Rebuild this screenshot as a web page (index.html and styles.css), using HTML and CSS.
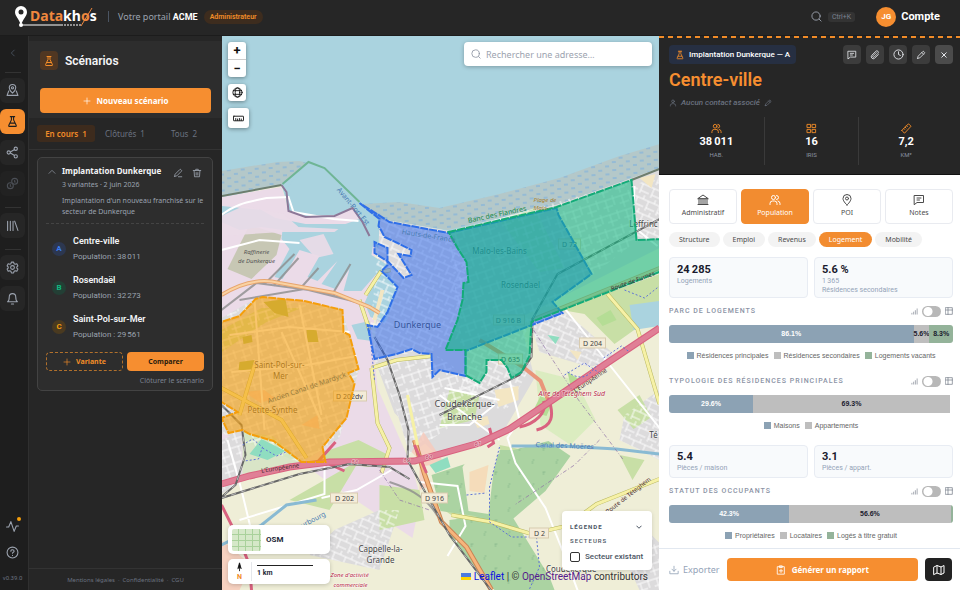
FILE: index.html
```html
<!DOCTYPE html>
<html lang="fr">
<head>
<meta charset="utf-8">
<meta name="viewport" content="width=device-width, initial-scale=1">
<title>Datakhos</title>
<link rel="stylesheet" href="styles.css">
</head>
<body>
<svg class="sprite" aria-hidden="true">
  <symbol id="flask" viewBox="0 0 24 24"><path d="M8 3h8M10 3v6L5 19.500a1 1 0 0 0 1 1.500h12a1 1 0 0 0 1-1.500L14 9V3M7.500 15h9"/></symbol>
  <symbol id="pencil" viewBox="0 0 24 24"><path d="M4 20l1-5L16 4a2 2 0 0 1 3 0l1 1a2 2 0 0 1 0 3L9 19l-5 1zM14 6l4 4"/></symbol>
  <symbol id="edit" viewBox="0 0 24 24"><path d="M4 20l1-5L16 4a2 2 0 0 1 3 0l1 1a2 2 0 0 1 0 3L9 19l-5 1zM13 21h8"/></symbol>
  <symbol id="trash" viewBox="0 0 24 24"><path d="M3 6h18M5 6l1 15h12l1-15M9 6V3h6v3M10 11v6M14 11v6"/></symbol>
  <symbol id="users" viewBox="0 0 24 24"><circle cx="9" cy="7" r="4"/><path d="M2 21v-2a5 5 0 0 1 5-5h4a5 5 0 0 1 5 5v2M15 3a4 4 0 0 1 0 8M18 14a5 5 0 0 1 4 5v2"/></symbol>
  <symbol id="user" viewBox="0 0 24 24"><circle cx="12" cy="7" r="4"/><path d="M4 21v-1a6 6 0 0 1 6-6h4a6 6 0 0 1 6 6v1"/></symbol>
  <symbol id="search" viewBox="0 0 24 24"><circle cx="11" cy="11" r="9"/><path d="M18 18l4 4"/></symbol>
  <symbol id="note" viewBox="0 0 24 24"><path d="M3 3h18v14H8l-5 4zM8 8h8M8 12h5"/></symbol>
  <symbol id="pin" viewBox="0 0 24 24"><path d="M12 22s8-7 8-13a8 8 0 0 0-16 0c0 6 8 13 8 13z"/><circle cx="12" cy="9" r="3"/></symbol>
  <symbol id="plus" viewBox="0 0 24 24"><path d="M12 3v18M3 12h18"/></symbol>
  <symbol id="bars" viewBox="0 0 24 24"><path d="M3 21v-3M9 21v-7M15 21V9M21 21V3"/></symbol>
  <symbol id="table" viewBox="0 0 24 24"><path d="M2 2h20v20H2zM2 9h20M9 2v20"/></symbol>
</svg>

<header class="topbar">
  <a class="logo" href="#" aria-label="Datakhos">
    <svg viewBox="0 0 85 24">
      <path class="logo-white" d="M6 0a6 6 0 0 1 6 6c0 4-4 7-6 13C4 13 0 10 0 6a6 6 0 0 1 6-6z"/>
      <circle class="logo-hole" cx="6" cy="6" r="2.500"/>
      <circle class="logo-white" cx="6" cy="19" r="2"/>
      <path class="logo-rule" d="M6 19h42"/><path class="logo-rule dots" d="M49 19h18"/>
      <text class="logo-word" x="15" y="15"><tspan class="logo-orange">Data</tspan>kh<tspan class="logo-orange">o</tspan>s</text>
      <path class="logo-slash" d="M77 2L66 20"/>
    </svg>
  </a>
  <span class="rule"></span>
  <p class="portal">Votre portail <b>ACME</b></p>
  <span class="role">Administrateur</span>
  <button class="quick" aria-label="Rechercher"><svg class="ic i11"><use href="#search"/></svg><kbd>Ctrl+K</kbd></button>
  <button class="account"><span class="avatar">JG</span>Compte</button>
</header>

<main class="shell">
  <nav class="rail" aria-label="Navigation">
    <button class="fold" aria-label="Replier"><svg class="ic i10" viewBox="0 0 24 24"><path d="M15 5l-7 7 7 7"/></svg></button>
    <hr>
    <button class="tool" aria-label="Carte"><svg class="ic i13" viewBox="0 0 24 24"><path d="M12 17s6-5 6-10a6 6 0 0 0-12 0c0 5 6 10 6 10z"/><circle cx="12" cy="7" r="2"/><path d="M5 13l-3 8h20l-3-8"/></svg></button>
    <button class="tool on" aria-label="Scénarios"><svg class="ic i13"><use href="#flask"/></svg></button>
    <button class="tool" aria-label="Réseau"><svg class="ic i13" viewBox="0 0 24 24"><circle cx="5" cy="12" r="3"/><circle cx="18" cy="5" r="3"/><circle cx="18" cy="19" r="3"/><path d="M8 11l7-4M8 13l7 4"/></svg></button>
    <button class="tool dim" aria-label="Comparer"><svg class="ic i13" viewBox="0 0 24 24"><circle cx="8" cy="16" r="5.500"/><circle cx="16" cy="8" r="5.500"/><path d="M8 14v3h1M16 6v3h1"/></svg></button>
    <hr>
    <button class="tool" aria-label="Bibliothèque"><svg class="ic i13" viewBox="0 0 24 24"><path d="M3 4v17M8 4v17M13 4v17M16 4l6 17"/></svg></button>
    <hr>
    <button class="tool" aria-label="Réglages"><svg class="ic i13" viewBox="0 0 24 24"><path d="M10 2h4l1 3 2 1 3-1 2 4-2 2v2l2 2-2 4-3-1-2 1-1 3h-4l-1-3-2-1-3 1-2-4 2-2v-2L2 9l2-4 3 1 2-1z"/><circle cx="12" cy="12" r="3.500"/></svg></button>
    <button class="tool" aria-label="Notifications"><svg class="ic i13" viewBox="0 0 24 24"><path d="M3 18c3-2 3-5 3-9a6 6 0 0 1 12 0c0 4 0 7 3 9zM10 22h4"/></svg></button>
    <div class="rail-end">
      <button class="plain" aria-label="Activité"><svg class="ic i13" viewBox="0 0 24 24"><path d="M1 13h4l4-10 6 18 4-10h4"/></svg><i class="dot"></i></button>
      <button class="plain" aria-label="Aide"><svg class="ic i13" viewBox="0 0 24 24"><circle cx="12" cy="12" r="10"/><path d="M9 9.500c0-4 6-3 6 0 0 2-3 2-3 4M12 17v.5"/></svg></button>
      <small>v0.39.0</small>
    </div>
  </nav>

  <aside class="side">
    <div class="side-head">
      <div class="side-title"><span class="badge"><svg class="ic i12"><use href="#flask"/></svg></span><h2>Scénarios</h2></div>
      <button class="primary wide"><svg class="ic i8"><use href="#plus"/></svg>Nouveau scénario</button>
    </div>
    <div class="filters">
      <button class="on">En cours <span>1</span></button><button>Clôturés <span>1</span></button><button>Tous <span>2</span></button>
    </div>
    <article class="scenario">
      <div class="sc-head">
        <svg class="ic i8 chev" viewBox="0 0 24 24"><path d="M3 16l9-9 9 9"/></svg>
        <div class="sc-name"><h3>Implantation Dunkerque</h3><p>3 variantes · 2 juin 2026</p></div>
        <button class="ghost" aria-label="Modifier"><svg class="ic i10"><use href="#edit"/></svg></button>
        <button class="ghost" aria-label="Supprimer"><svg class="ic i10"><use href="#trash"/></svg></button>
      </div>
      <p class="sc-desc">Implantation d'un nouveau franchisé sur le secteur de Dunkerque</p>
      <ul class="variants">
        <li><span class="mark a">A</span><div><b>Centre-ville</b><p>Population : 38&#8201;011</p></div></li>
        <li><span class="mark b">B</span><div><b>Rosendaël</b><p>Population : 32&#8201;273</p></div></li>
        <li><span class="mark c">C</span><div><b>Saint-Pol-sur-Mer</b><p>Population : 29&#8201;561</p></div></li>
      </ul>
      <div class="pair"><button class="dashed"><svg class="ic i8"><use href="#plus"/></svg>Variante</button><button class="primary dark">Comparer</button></div>
      <a class="close-sc" href="#">Clôturer le scénario</a>
    </article>
    <footer class="legal"><a href="#">Mentions légales</a>·<a href="#">Confidentialité</a>·<a href="#">CGU</a></footer>
  </aside>

  <section class="map" aria-label="Carte">
    <svg class="canvas" viewBox="222 36 438 554" preserveAspectRatio="xMidYMid slice">
      <defs>
        <pattern id="tide" width="14" height="8" patternUnits="userSpaceOnUse" patternTransform="rotate(-3)"><rect width="14" height="8" fill="#b4c8c9"/><path d="M1 2h4M8 6h4" stroke="#76aee2" stroke-width="1"/></pattern>
        <pattern id="streets" width="17" height="15" patternUnits="userSpaceOnUse" patternTransform="rotate(-18)"><path d="M0 3h17M0 10h10M4 3v12M12 0v10" stroke="#fff" stroke-width=".9" fill="none"/></pattern>
        <pattern id="streets2" width="12" height="14" patternUnits="userSpaceOnUse" patternTransform="rotate(24)"><path d="M0 4h12M3 4v10M9 0v4M3 11h9" stroke="#fff" stroke-width=".9" fill="none"/></pattern>
        <pattern id="wood" width="24" height="24" patternUnits="userSpaceOnUse"><path d="M5 5v3M5 4h2M16 16v3M15 16h3" stroke="#82b58a" stroke-width=".7"/></pattern>
      </defs>
      <rect x="222" y="36" width="438" height="554" fill="#aad3df"/>
      <path fill="#efeed7" d="M222 198L282 185L290 212L353 209L366 219L381 219L449 231L560 204L660 168V590H222z"/>
      <path fill="url(#tide)" d="M222 171l24-4 32-5 22-1 8 2-25 21-61 11zM362 204l38-2 40 6 60-14 60-16 60-22 40-12v26l-100 34-112 26-67-11z"/>
      <path fill="#ebdbe8" d="M222 197l60-10 8 26 63-5 25 15-3 35 15 20-18 50 6 60 35 80 8 30-8 40-90-60-20-15-81 15z"/>
      <path fill="#dcdbdc" d="M380 219l70 12 110-27 100-36v80l-140 70 15 60-35 60-60 20-45-45-20-54z"/>
      <path fill="#dcdbdc" d="M222 318l35-20 85 10 18 60-20 70-38 25-80-30zM222 440l20-8v50l-20 12zM375 360l60-6 45 30-10 30-60 40-15-50zM530 320l35-9 55 48-30 8-50-15zM400 510l-20 60-70-15 25-25 45-20zM620 548l25-20 15 15v47h-20zM625 415l35-25v70l-40-20z"/>
      <path fill="#c8dfa6" d="M324 452l35-12 30 15-20 12-45-5zM222 330l40-22 40 0-35 14-45 30zM562 310l98-36v38l-45 32-30-30zM450 390l30 5-5 25-35 8zM430 500l35-35 40 30-10 50zM618 410l22-15 12 22-18 12zM500 445l40 8-35 25zM380 485l40 5 5 30-45 10zM290 500l70-40-30 50zM620 455l25 5-12 20z"/>
      <path fill="#abd3a2" d="M432 475l55-18 62-16 22 15-25 35-35 30-70-10zM450 520l60-8 40 65 5 13h-60l-45-53zM500 450l60 0-10 30-50 20z"/>
      <path fill="url(#wood)" d="M432 475l55-18 62-16 22 15-25 35-35 30-70-10zM450 520l60-8 40 65 5 13h-60l-45-53z"/>
      <path fill="#efeed7" d="M478 446l22 2-6 24-5 42-20-3-6-44z"/>
      <path fill="#f5dcba" d="M470 472l19-7-4 28-15-2z"/>
      <path fill="#cdebb0" d="M243 432l30 4 28 24-8 7-50 7zM500 220l35-12 30 60-25 4zM536 370l40 10 20 40-25 25-30-20z" opacity=".6"/>
      <path fill="#b5dd95" d="M533 412l8-16 12 6-6 14zM568 372l16 10-12 8zM597 318l14-8 6 10-14 6z"/>
      <path fill="#c7c7b4" d="M250 225l32 10-5 20-25 24-24-10z"/>
      <path fill="#aad3df" d="M222 206l40 4 14 8 30 6 40 0 22-8 8 14-4 25 16 10-12 10-14 16-18 0 6-22-14 20-14-5 16-23-20 20-10-4 12-21-20-6-17 29-8-2 15-28-8-10 1-9-21-3-22 3-18-8zM286 190l22-28 17 6 55 51-1 30-8-10-18-31-18 7-29 1-18-6zM378 274l9-3 12 16-13 36-15-6-6-14zM352 325l18-4 2 20-14-2zM630 305l30-4v25l-26 4z"/>
      <path fill="#ebdbe8" d="M222 216l22-10 40 8 15 13 40 2-4 3-52 0-61 4zM300 240l24-6 10 20-18 4z" opacity=".9"/>
      <path fill="url(#streets)" d="M222 318l35-20 85 10 18 60-20 70-38 25-80-30zM450 232l180-50 6 60-105 80-70 25zM375 360l60-6 45 30-10 30-60 40-15-50zM222 440l20-8v50l-20 12zM620 548l25-20 15 15v47h-20z"/>
      <path fill="url(#streets2)" d="M381 220l65 12 20 35-5 70-30 15-55 5-5-30zM466 350l60-28 5 45-25 45-45-20zM530 320l35-9 55 48-30 8-50-15zM400 510l-20 60-70-15 25-25 45-20zM635 185l25-10v65l-22-2zM625 415l35-25v70l-40-20z"/>
      <path fill="#f7c9ba" d="M412 452l12-20 20 30-18 4zM222 540l30 25-12 25h-18zM420 465l8 22-8 3zM245 392l20-2 10 8-14 5zM302 425l16-10 2 14z" opacity=".8"/>
      <path fill="#8fddc0" d="M262 439l24 12-18 9-18-6zM548 335l12 2-4 7zM430 465l18-8 3 10-15 6zM499 395l8-2 1 6-7 2z"/>
      <path fill="#a9bd62" d="M240 362l15-2-4 12-12-2zM307 330l10 0 2 12-11 0zM243 337l9-2 1 7-9 2zM264 302l22-3 3 18-14-4z"/>
      <path fill="#f3e6c3" d="M385 290l-8 30-4 0 8-30zM495 390l24-4 0 14-20 7zM640 178l16-4-4 14zM570 350l12 2-4 8zM474 420l14-4 2 8-12 4z"/>
      <g fill="none" stroke="#fff" stroke-width="2"><path d="M222 215c15-12 28-13 45-17l22-1 5 15 40 7 25 2M240 520l85-26 0-35M565 308l95 120M228 440l14 50 12 50M420 482l38 4 8 40-18 30M510 380l10 40-12 18 8 25 30 45 20 50 15 40M440 425l30 0 25-20M500 400l-55-12M440 395l60 45M635 186l-2 40 25 20M322 498l35-8 35-20M222 250l38-10 40 3M230 335l60-8 60 5M282 332l40 90M232 372l70-6 55-10M255 300l10 130M300 305l22 110"/></g>
      <g fill="none" stroke="#8c8c8c" stroke-width="2" opacity=".8"><path d="M222 310l35-27 60 8 50 14M265 284l30-30M274 286l25-28M240 300l65-11 60 15M303 286l16-18M333 294l18-30M390 482c15 5 35 12 48 34"/></g>
      <g fill="none" stroke="#b7b65e" stroke-width="4"><path d="M366 295l15-23 10-2M360 300l10 30M372 368l25-8 35-4M372 368l6 55 12 25-8 25M222 388l60 32 25 38M452 515l40 7 20 6 20 6 35-8 30-22 63-25M608 294l30 35 22 75M240 415l15-50"/></g>
      <g fill="none" stroke="#f6f1a6" stroke-width="3"><path d="M366 295l15-23 10-2M360 300l10 30M372 368l25-8 35-4M372 368l6 55 12 25-8 25M222 388l60 32 25 38M452 515l40 7 20 6 20 6 35-8 30-22 63-25M608 294l30 35 22 75M240 415l15-50"/></g>
      <path d="M222 295q30-19 58-12l55 10 35 14 10 6M532 320l128-52" fill="none" stroke="#e7a56e" stroke-width="4"/>
      <path d="M222 295q30-19 58-12l55 10 35 14 10 6M532 320l128-52" fill="none" stroke="#fad2a2" stroke-width="2"/>
      <path d="M415 440l10 34 17 48 25 25 25 43" fill="none" stroke="#c98353" stroke-width="5"/>
      <path d="M415 440l10 34 17 48 25 25 25 43" fill="none" stroke="#f6b57c" stroke-width="3"/>
      <path d="M408 395l10 50" fill="none" stroke="#f6f1a6" stroke-width="3"/>
      <path d="M521 365l20 16 8 20M480 340l42 26" fill="none" stroke="#e9967a" stroke-width="4"/>
      <g fill="none" stroke="#d9627f" stroke-width="7"><path d="M222 484l28-8 40-9 40-5 85-1 65-18 30-14 40-27 62-42 48-32"/><path stroke-width="3" d="M318 462l18-20M325 462l20 9M549 398c6 18 4 28-12 32M520 427c15-3 28-14 24-26M222 505l20 40 8 20 2 25M490 428l4 15-6 4M415 445l12 28"/></g>
      <path d="M222 484l28-8 40-9 40-5 85-1 65-18 30-14 40-27 62-42 48-32" fill="none" stroke="#e07f96" stroke-width="5"/>
      <g fill="none" stroke="#666" stroke-width="2"><path d="M375 337l13 23 12 35 9 35-1 30 22 40 20 35 30 40 15 20M222 405l20 20 4 30-10 30-14 12M222 498l78-24 50-10 40 3 20 12M440 415l80-40 12-18 1-38 25-45 102-55"/></g>
      <g fill="none" stroke="#bbb" stroke-width="1" stroke-dasharray="5 5"><path d="M375 337l13 23 12 35 9 35-1 30 22 40 20 35 30 40 15 20M222 405l20 20 4 30-10 30-14 12M222 498l78-24 50-10 40 3 20 12M440 415l80-40 12-18 1-38 25-45 102-55"/></g>
      <g fill="none" stroke="#5f74d6" stroke-width="1" stroke-dasharray="2 2"><path d="M243 445l10-6 10 8-4 12-14 2M263 448l14 8 12-5M500 447l-10 40 0 35 22 15 25 0 3 30-10 22M467 495l20-2M565 375l20-12 15 10M625 290l20 8 15-12M370 330l5 50M604 358l18-12 8 6M568 372c15 10 22 4 30-8"/></g>
      <path d="M512 446l50 0 55 3 43 5M222 545l40-20 25-20 30-5" fill="none" stroke="#89bad3" stroke-width="3"/>
      <path d="M534 330l45 70 45 60M600 440l-25 25-60 40M380 470l20 30 30 10" fill="none" stroke="#8d6fa5" stroke-width="1" stroke-dasharray="4 2 1 2" opacity=".7"/>
      <path d="M282 185l5 7 2 19 17 6 29-1 18-8 10 14 7 14" fill="none" stroke="#8c7898" stroke-width="2"/>
      <path d="M222 196l60-11M660 169l-28 11" fill="none" stroke="#6e7e6e" stroke-width="2"/>
      <path d="M283 184l26-22 16 6 35 34" fill="none" stroke="#6fb595" stroke-width="2"/>

      <g class="place"><text x="280" y="368">Saint-Pol-sur-</text><text x="281" y="379">Mer</text><text x="273" y="413">Petite-Synthe</text><text class="city" x="418" y="328">Dunkerque</text><text x="500" y="254">Malo-les-Bains</text><text x="521" y="288">Rosendael</text><text class="city" x="465" y="407">Coudekerque-</text><text class="city" x="465" y="420">Branche</text><text x="381" y="552">Cappelle-la-</text><text x="381" y="563">Grande</text><text x="573" y="572">Coudekerque-</text><text x="644" y="227">Leffrinc</text><text x="654" y="438">Té</text></g>
      <g class="area"><text x="257" y="254">Raffinerie</text><text x="257" y="263">de Dunkerque</text></g>
      <g class="tags"><rect x="334" y="391" width="33" height="10"/><rect x="559" y="239" width="22" height="10"/><rect x="494" y="315" width="31" height="10"/><rect x="499" y="354" width="24" height="10"/><rect x="580" y="338" width="26" height="10"/><rect x="422" y="493" width="26" height="10"/><rect x="331" y="493" width="27" height="10"/><rect x="530" y="528" width="19" height="10"/></g>
      <g class="tagtext"><text x="350" y="399">D 202dv</text><text x="570" y="247">D 72</text><text x="509" y="323">D 916 B</text><text x="511" y="362">D 635</text><text x="593" y="346">D 204</text><text x="435" y="501">D 916</text><text x="345" y="501">D 202</text><text x="540" y="536">D 2</text></g>

      <path class="zone zc" d="M215 325l7-3 18-6 16-17 7-2 42 4 38 9 1 22 6 3 9 34-10 4 6 11-8 34-24 29 3 15h-24l-28-21-24-7-7-4-14 3-7-15 16-6-16-10h-7z"/>
      <path class="zone za" d="M360 203l20 16-1 7 3 5 3 6 13 6 14 7-1 6-12-2 13 21-8 3-15-16-14-9v-11l13 6v17l-6 6 16 16-10 25-10 15-10-2 7 34 22-5 15-5 8 4 12 1 1 23 7-7 26 6v-25l97-38-10-11 39-28-33-59-2-7-108 25-59-11z"/>
      <path class="zone zb" d="M449 232l108-25 75-27 5 60 28-1v31l-133 52-2 34-8 16-10 6-4-10-6-8h-15v12l-7 11-14-8v-25l-20 0 12-30 5-20 1-17 5-1-2-20-9-14z"/>
      <g class="water"><text transform="translate(337 190) rotate(50)">Avant-Port Est</text><text transform="translate(402 234) rotate(9)">Hauts-de-France</text><text transform="translate(536 447) rotate(2)">Canal des Moëres</text><text transform="translate(286 537) rotate(-28)">de Bourbourg</text></g>
      <g class="red"><text class="aire" x="539" y="396">Aire de Téteghem Sud</text><text x="331" y="577">Zone d'activité</text><text x="334" y="587">commerciale</text><text x="352" y="464">58</text><text x="404" y="462">59</text><text x="426" y="459">60</text><text x="475" y="446">61</text></g>
      <g class="road"><text transform="translate(592 382) rotate(-34)">L'Européenne</text><text transform="translate(281 470) rotate(-8)">L'Européenne</text><text transform="translate(630 497) rotate(-38)">Route de Téteghem</text><text transform="translate(634 283) rotate(-20)">Route de Furnes</text></g>
      <text class="canal" transform="translate(308 390) rotate(-19)">Ancien Canal de Mardyck</text>
      <text class="banc" transform="translate(469 223) rotate(-12)">Banc des Flandres</text>
      <g class="beach"><text x="534" y="202">Plage de</text><text x="534" y="210">Malo-</text></g>
    </svg>

    <div class="controls">
      <div class="zoom"><button aria-label="Zoom avant">+</button><button aria-label="Zoom arrière">−</button></div>
      <button class="sq" aria-label="Monde"><svg class="ic i11" viewBox="0 0 24 24"><circle cx="12" cy="12" r="10"/><ellipse cx="12" cy="12" rx="5" ry="10"/><path d="M3 8h18M3 16h18"/></svg></button>
      <button class="sq big" aria-label="Mesurer"><svg class="ic i11" viewBox="0 0 24 24"><rect x="1" y="7" width="22" height="10" rx="1"/><path d="M6 12v4M10 13v3M14 12v4M18 13v3"/></svg></button>
    </div>
    <label class="find"><svg class="ic i10"><use href="#search"/></svg><input type="search" placeholder="Rechercher une adresse…" aria-label="Rechercher une adresse"></label>
    <div class="bases">
      <button class="base"><span class="thumb"></span>OSM</button>
      <div class="scale"><div class="north"><svg viewBox="0 0 8 12"><path d="M4 1l2 7-2-2-2 2z"/><path d="M4 6v5"/></svg>N</div><div class="km"><i></i>1 km</div></div>
    </div>
    <div class="corner">
      <section class="legend">
        <button>LÉGENDE<svg class="ic i6" viewBox="0 0 24 24"><path d="M3 8l9 9 9-9"/></svg></button>
        <h4>SECTEURS</h4>
        <label><input type="checkbox">Secteur existant</label>
      </section>
      <p class="credit"><i class="flag"></i><a href="#">Leaflet</a> | © <a class="seen" href="#">OpenStreetMap</a> contributors</p>
    </div>
  </section>

  <aside class="panel">
    <header class="hero">
      <div class="hero-top">
        <span class="chip"><svg class="ic i10"><use href="#flask"/></svg>Implantation Dunkerque — A</span>
        <div class="acts">
          <button aria-label="Notes"><svg class="ic i10"><use href="#note"/></svg></button>
          <button aria-label="Pièces jointes"><svg class="ic i10" viewBox="0 0 24 24"><path d="M20 11l-9 9a5 5 0 0 1-7-7l10-10a3.500 3.500 0 0 1 5 5l-9 9a2 2 0 0 1-3-3l8-8"/></svg></button>
          <button aria-label="Historique"><svg class="ic i11" viewBox="0 0 24 24"><circle cx="12" cy="12" r="10"/><path d="M12 6v6l4 2"/></svg></button>
          <button aria-label="Modifier"><svg class="ic i10"><use href="#pencil"/></svg></button>
          <button class="x" aria-label="Fermer"><svg class="ic i6" viewBox="0 0 24 24"><path d="M3 3l18 18M21 3L3 21"/></svg></button>
        </div>
      </div>
      <h1>Centre-ville</h1>
      <p class="contact"><svg class="ic i8"><use href="#user"/></svg>Aucun contact associé<svg class="ic i8"><use href="#pencil"/></svg></p>
      <dl class="stats">
        <div><svg class="ic i11"><use href="#users"/></svg><dd>38&#8201;011</dd><dt>HAB.</dt></div>
        <div><svg class="ic i11" viewBox="0 0 24 24"><path d="M3 3h7v7H3zM14 3h7v7h-7zM3 14h7v7H3zM14 14h7v7h-7z"/></svg><dd>16</dd><dt>IRIS</dt></div>
        <div><svg class="ic i11" viewBox="0 0 24 24"><path d="M2 16L16 2q2 0 3 2t3 3L8 22q-2 0-3-2t-3-4zM12 6l2 2M9 9l2 2M6 12l2 2"/></svg><dd>7,2</dd><dt>KM²</dt></div>
      </dl>
    </header>
    <div class="body">
      <nav class="tabs">
        <button><svg class="ic i12" viewBox="0 0 24 24"><path d="M2 9l10-7 10 7zM2 21h20M4 9v12M8 9v12M12 9v12M16 9v12M20 9v12"/></svg>Administratif</button>
        <button class="on"><svg class="ic i12"><use href="#users"/></svg>Population</button>
        <button><svg class="ic i12"><use href="#pin"/></svg>POI</button>
        <button><svg class="ic i12"><use href="#note"/></svg>Notes</button>
      </nav>
      <nav class="pills"><button>Structure</button><button>Emploi</button><button>Revenus</button><button class="on">Logement</button><button>Mobilité</button></nav>
      <div class="cards tall"><div><b>24&#8201;285</b><p>Logements</p></div><div><b>5.6 %</b><p>1&#8201;365</p><p>Résidences secondaires</p></div></div>

      <section class="chart">
        <div class="chart-head"><h3>PARC DE LOGEMENTS</h3><svg class="ic i7"><use href="#bars"/></svg><input type="checkbox" role="switch" aria-label="Afficher le tableau du parc"><svg class="ic i8"><use href="#table"/></svg></div>
        <div class="stack"><span class="s1" style="width:86.1%">86.1%</span><span class="s2" style="width:5.6%">5.6%</span><span class="s3" style="width:8.3%">8.3%</span></div>
        <p class="key"><span class="k1">Résidences principales</span><span class="k2">Résidences secondaires</span><span class="k3">Logements vacants</span></p>
      </section>
      <section class="chart">
        <div class="chart-head"><h3>TYPOLOGIE DES RÉSIDENCES PRINCIPALES</h3><svg class="ic i7"><use href="#bars"/></svg><input type="checkbox" role="switch" aria-label="Afficher le tableau de typologie"><svg class="ic i8"><use href="#table"/></svg></div>
        <div class="stack"><span class="s1" style="width:29.6%">29.6%</span><span class="s2" style="width:69.3%">69.3%</span></div>
        <p class="key"><span class="k1">Maisons</span><span class="k2">Appartements</span></p>
      </section>
      <div class="cards"><div><b>5.4</b><p>Pièces / maison</p></div><div><b>3.1</b><p>Pièces / appart.</p></div></div>
      <section class="chart">
        <div class="chart-head"><h3>STATUT DES OCCUPANTS</h3><svg class="ic i7"><use href="#bars"/></svg><input type="checkbox" role="switch" aria-label="Afficher le tableau des occupants"><svg class="ic i8"><use href="#table"/></svg></div>
        <div class="stack"><span class="s1" style="width:42.3%">42.3%</span><span class="s2" style="width:56.9%">56.6%</span><span class="s3" style="width:0.8%"></span></div>
        <p class="key"><span class="k1">Propriétaires</span><span class="k2">Locataires</span><span class="k3">Logés à titre gratuit</span></p>
      </section>
    </div>
    <footer class="foot">
      <button class="export"><svg class="ic i10" viewBox="0 0 24 24"><path d="M2 15v6h20v-6M12 3v12M7 10l5 5 5-5"/></svg>Exporter</button>
      <button class="primary report"><svg class="ic i10" viewBox="0 0 24 24"><path d="M4 4h16v18H4zM9 2h6v4H9zM12 10v8M8 14h8"/></svg>Générer un rapport</button>
      <button class="mapbtn" aria-label="Plan"><svg class="ic i12" viewBox="0 0 24 24"><path d="M2 6l6-3 8 3 6-3v15l-6 3-8-3-6 3zM8 3v15M16 6v15"/></svg></button>
    </footer>
  </aside>
</main>
</body>
</html>
```

FILE: styles.css
```css
* { box-sizing: border-box; margin: 0; padding: 0; }
html, body { height: 100%; }
body {
  display: flex; flex-direction: column; overflow: hidden;
  background: #262626; color: #f3f4f6;
  font-family: Roboto, "Noto Sans", sans-serif; font-size: 8px; line-height: 12px;
}
button, input { font: inherit; color: inherit; border: 0; background: none; }
button { cursor: pointer; display: flex; align-items: center; justify-content: center; }
a { color: inherit; text-decoration: none; }
ul { list-style: none; }
.sprite { position: absolute; width: 0; height: 0; }
.ic { fill: none; stroke: currentColor; stroke-width: 2; stroke-linecap: round; stroke-linejoin: round; flex: none; display: block; }
.i6 { width: 6px; height: 6px; stroke-width: 4; }
.i7 { width: 7px; height: 7px; }
.i8 { width: 8px; height: 8px; }
.i10 { width: 10px; height: 10px; }
.i11 { width: 11px; height: 11px; }
.i12 { width: 12px; height: 12px; }
.i13 { width: 13px; height: 13px; }

/* Top bar */
.topbar { flex: none; height: 36px; display: flex; align-items: center; padding: 0 20px 2px 15px; border-bottom: 1px solid #1c1c1c; }
.logo svg { display: block; width: 85px; height: 24px; margin-top: 3px; }
.logo-white { fill: #fff; }
.logo-hole { fill: #262626; }
.logo-rule { stroke: #fff; stroke-width: 1; }
.dots { stroke-dasharray: 2 1; }
.logo-word { font: 700 14px "Noto Sans", sans-serif; fill: #fff; }
.logo-orange { fill: #f0883e; }
.logo-slash { stroke: #f0883e; stroke-width: 1; }
.rule { width: 1px; height: 11px; background: #4b5563; margin: 0 9px 0 8px; }
.portal { font: 9px/14px "Noto Sans", sans-serif; color: #9ca3af; }
.portal b { color: #fff; font-family: Roboto, sans-serif; font-size: 9px; }
.role { margin-left: 6px; padding: 1px 6px; border-radius: 8px; background: #3d2c1e; color: #f28c28; font-weight: 600; font-size: 7px; }
.quick { margin-left: auto; gap: 6px; color: #9ca3af; }
.quick kbd { font: 7px/10px Roboto, sans-serif; background: #333; border-radius: 3px; padding: 0 4px; color: #7b8290; }
.account { margin-left: 21px; gap: 5px; font-size: 11px; font-weight: 700; color: #fff; }
.avatar { width: 20px; height: 20px; border-radius: 50%; background: #f68e30; font-size: 8px; line-height: 20px; text-align: center; }

.shell { flex: 1; min-height: 0; display: grid; grid-template-columns: 28px 194px minmax(0, 1fr) 301px; }

/* Icon rail */
.rail { background: #1e1e1e; display: flex; flex-direction: column; align-items: flex-start; gap: 6px; padding-top: 8px; color: #9ca3af; }
.rail hr { width: 16px; border: 0; border-top: 1px solid #333; margin: 5px 0 0 5px; }
.rail hr + .tool { margin-top: -1px; }
.tool { width: 25px; height: 25px; border-radius: 6px; background: #262626; }
.tool.on { background: #f68e30; color: #1e1e1e; }
.tool.dim { color: #4b4f56; background: #222; }
.fold { width: 25px; height: 17px; color: #4b5563; }
.rail-end { margin-top: auto; width: 25px; display: flex; flex-direction: column; align-items: center; gap: 13px; padding-bottom: 6px; }
.plain { position: relative; }
.dot { position: absolute; top: -3px; right: -2px; width: 4px; height: 4px; border-radius: 50%; background: #f59e0b; }
.rail-end small { font-size: 6px; color: #6b7280; }

/* Scenario sidebar */
.side { display: flex; flex-direction: column; border-left: 1px solid #303030; font-family: "Noto Sans", sans-serif; min-width: 0; }
.side-head { background: #2d2d2d; margin-top: 5px; padding: 10px 11px 5px; }
.side-title { display: flex; align-items: center; gap: 7px; margin-bottom: 18px; }
.badge { width: 18px; height: 19px; border-radius: 4px; background: #503722; color: #f28c28; display: grid; place-items: center; }
h2 { font: 600 12px/16px Roboto, sans-serif; }
.primary { background: #f68e30; color: #fff; border-radius: 4px; font-weight: 700; gap: 6px; }
.wide { width: 100%; height: 25px; font-size: 8px; }
.filters { display: grid; grid-template-columns: repeat(3, 1fr); gap: 1px; padding: 7px 9px 7px 8px; border-bottom: 1px solid #333; color: #6b7280; }
.filters button { height: 17px; border-radius: 3px; gap: 4px; }
.filters .on { background: #3d2b1d; color: #f28c28; font-weight: 600; }
.scenario { margin: 7px 9px 0 8px; padding: 6px 8px 3px; border: 1px solid #434343; border-radius: 5px; background: #2d2d2d; color: #9ca3af; }
.sc-head { display: flex; gap: 9px; padding-right: 2px; }
.chev { margin: 4px 0 0 2px; }
.sc-name { flex: 1; margin-left: -3px; white-space: nowrap; }
h3 { font-size: 8px; line-height: 13px; color: #f3f4f6; }
.sc-name p { font-size: 7px; line-height: 12px; margin-top: 2px; }
.ghost { height: 18px; }
.sc-desc { margin: 4px -4px 0 16px; padding-bottom: 6px; font-size: 7px; line-height: 11px; }
.variants { border-top: 1px dashed #444; padding: 5px 0 6px 6px; }
.variants li { display: flex; align-items: center; gap: 7px; height: 39px; font-family: Roboto, sans-serif; }
.variants b { display: block; font-size: 9px; font-weight: 600; line-height: 15px; color: #f3f4f6; }
.variants p { line-height: 15px; }
.mark { width: 14px; height: 14px; border-radius: 50%; font-weight: 700; line-height: 14px; text-align: center; }
.a { background: #2c3750; color: #3b7cf0; }
.b { background: #233f35; color: #10b981; }
.c { background: #4a3a20; color: #f59e0b; }
.pair { display: grid; grid-template-columns: 1fr 1fr; gap: 4px; }
.pair button { height: 19px; border-radius: 4px; font-weight: 700; font-size: 7px; }
.pair .dashed { border: 1px dashed #b0702c; color: #f28c28; gap: 5px; }
.primary.dark { color: #2a1c0e; }
.close-sc { display: block; text-align: right; font-size: 7px; line-height: 12px; margin-top: 4px; color: #7b8290; }
.legal { margin-top: auto; border-top: 1px solid #333; height: 22px; display: flex; align-items: center; justify-content: center; gap: 3px; font-size: 6px; color: #6b7280; }

/* Map */
.map { position: relative; overflow: hidden; background: #aad3df; color: #1f2937; }
.canvas { position: absolute; inset: 0; width: 100%; height: 100%; font-family: "Noto Sans", sans-serif; }
.canvas text { paint-order: stroke; text-anchor: middle; }
.place { font-size: 8px; fill: #444; stroke: #ffffff80; stroke-width: 1px; }
.place .city { font-size: 9px; }
.area { font-size: 6px; font-style: italic; fill: #555; }
.tags rect { fill: #f4ecd8; stroke: #d8cbaf; stroke-width: 1px; }
.tagtext { font-size: 7px; fill: #444; }
.canvas .water text, .canvas .banc, .canvas .red text, .canvas .beach text { text-anchor: start; }
.water { font-size: 7px; fill: #4b7db5; }
.canal { font-size: 7px; fill: #997b3c; }
.banc { font-size: 7px; fill: #1d8c4a; }
.beach { font-size: 6px; font-style: italic; fill: #a8802e; }
.red { font-size: 6px; font-style: italic; fill: #b8294a; stroke: #ffffffa0; stroke-width: 1px; }
.aire { font-size: 7px; }
.road { font-size: 6px; fill: #4a2a30; }
.zone { stroke-width: 2; stroke-dasharray: 8 1; }
.za { fill: #2563eb80; stroke: #2f6fe8; }
.zb { fill: #10b98190; stroke: #13ab78; }
.zc { fill: #f59e0b99; stroke: #f59e0b; }

.controls { position: absolute; left: 6px; top: 6px; display: flex; flex-direction: column; align-items: flex-start; gap: 7px; color: #111; }
.zoom, .sq { background: #fff; border-radius: 3px; box-shadow: 0 1px 4px #0006; }
.zoom button { width: 18px; height: 17px; font-size: 13px; font-weight: 700; }
.zoom button + button { height: 18px; border-top: 1px solid #ccc; }
.sq { width: 18px; height: 17px; }
.big { width: 21px; height: 20px; }
.find { position: absolute; right: 7px; top: 6px; width: 188px; height: 24px; display: flex; align-items: center; gap: 5px; padding: 0 7px; background: #fff; border-radius: 4px; box-shadow: 0 1px 4px #0004; color: #8b93a1; }
.find input { flex: 1; min-width: 0; font: 9px "Noto Sans", sans-serif; outline: 0; }
.find input::placeholder { color: #9ca3af; }
.bases { position: absolute; left: 6px; bottom: 6px; width: 102px; display: flex; flex-direction: column; gap: 5px; }
.base, .scale { background: #fff; border-radius: 5px; box-shadow: 0 1px 4px #0003; }
.base { height: 29px; justify-content: flex-start; padding: 0 4px; gap: 5px; font-weight: 700; }
.thumb { width: 29px; height: 22px; border-radius: 2px; background: repeating-linear-gradient(90deg, transparent 0 6px, #a9d19b 6px 7px), repeating-linear-gradient(transparent 0 5px, #a9d19b 5px 6px), #d5e8c8; }
.scale { height: 25px; display: flex; align-items: center; }
.north { width: 24px; border-right: 1px solid #e5e7eb; text-align: center; color: #f28c28; font-weight: 700; font-size: 7px; line-height: 8px; }
.north svg { display: block; width: 7px; height: 10px; margin: 0 auto 1px; fill: #111; stroke: #111; stroke-width: 1; }
.km { padding-left: 5px; font-weight: 700; font-size: 7px; line-height: 10px; }
.km i { display: block; width: 56px; height: 1px; background: #222; margin-bottom: 2px; }
.corner { position: absolute; right: 7px; bottom: 6px; display: flex; flex-direction: column; align-items: flex-end; }
.legend { width: 90px; height: 59px; padding: 10px 8px 0; background: #fff; border-radius: 4px; box-shadow: 0 1px 4px #0002; color: #4b5563; }
.legend button { width: 100%; justify-content: space-between; padding-right: 2px; font-weight: 700; font-size: 6px; letter-spacing: 1px; line-height: 12px; }
.legend h4 { font-size: 6px; letter-spacing: 1px; line-height: 12px; margin: 2px 0 4px; font-weight: 500; }
.legend label { display: flex; align-items: center; gap: 5px; font-weight: 500; white-space: nowrap; }
.legend input { appearance: none; width: 10px; height: 10px; border: 1px solid #333; border-radius: 2px; }
.credit { font-size: 10px; line-height: 14px; padding-right: 4px; white-space: nowrap; color: #333; }
.credit a { color: #0a12e0; }
.credit .seen { color: #551a8b; }
.flag { display: inline-block; width: 10px; height: 7px; background: linear-gradient(#4c7be1 50%, #ffd500 50%); margin-right: 3px; }

/* Detail panel */
.panel { display: flex; flex-direction: column; background: #fff; min-height: 0; color: #374151; }
.hero { flex: none; background: #262626; padding: 9px 7px 9px 10px; color: #fff; border-bottom: 1px solid #111; background-image: repeating-linear-gradient(90deg, #f28c28 0 5px, #262626 5px 9px); background-size: 100% 2px; background-repeat: no-repeat; }
.hero-top { display: flex; justify-content: space-between; align-items: center; }
.chip { height: 19px; display: flex; align-items: center; gap: 4px; padding: 0 6px; border-radius: 4px; background: #262f42; font-weight: 500; white-space: nowrap; }
.chip svg, .stats svg { color: #f28c28; }
.acts { display: flex; gap: 5px; }
.acts button { width: 18px; height: 19px; border-radius: 4px; background: #3c3c3c; color: #e5e7eb; }
.acts .x { background: #4b4b4b; }
h1 { font-size: 18px; font-weight: 600; line-height: 22px; color: #f68e30; margin-top: 5px; }
.contact { display: flex; align-items: center; gap: 4px; font-style: italic; font-weight: 500; color: #6b7280; margin-top: 6px; }
.stats { display: grid; grid-template-columns: repeat(3, 1fr); margin-top: 8px; text-align: center; }
.stats div { display: flex; flex-direction: column; align-items: center; height: 48px; padding-top: 6px; }
.stats div + div { border-left: 1px solid #3a3a3a; }
.stats dd { font-size: 11px; line-height: 16px; font-weight: 700; }
.stats dt { font-size: 6px; line-height: 10px; color: #8b93a1; }
.body { flex: 1; min-height: 0; overflow: hidden; padding: 14px 7px 0 10px; }
.tabs { display: grid; grid-template-columns: repeat(4, 1fr); gap: 4px; }
.tabs button { height: 35px; flex-direction: column; gap: 1px; border: 1px solid #e9ebf0; border-radius: 4px; font: 7px/12px "Noto Sans", sans-serif; color: #4b4b4b; }
.tabs .on, .pills .on { background: #f28c30; border-color: #f28c30; color: #fff; }
.pills { display: flex; gap: 3px; margin: 8px 0 10px; }
.pills button { height: 15px; padding: 0 10px; border-radius: 8px; background: #f3f3f3; font: 7px/15px "Noto Sans", sans-serif; color: #4b4b4b; }
.cards { display: grid; grid-template-columns: 1fr 1fr; gap: 6px; margin-top: 14px; }
.cards div { border: 1px solid #e8ecf3; border-radius: 4px; background: #f8fafc; padding: 4px 7px 3px; min-height: 33px; }
.cards.tall { margin: 0; }
.cards.tall div { min-height: 41px; padding-top: 5px; padding-bottom: 2px; }
.cards b { display: block; font-size: 11px; line-height: 14px; color: #1a1a2e; }
.cards p { font-size: 7px; line-height: 9px; color: #94a3b8; }
.chart { margin-top: 7px; }
.chart + .chart { margin-top: 14px; }
.chart-head { display: flex; align-items: center; gap: 4px; height: 12px; color: #6b7280; }
.chart-head h3 { flex: 1; font-size: 7px; line-height: 12px; letter-spacing: 1px; font-weight: 500; color: #8b93a5; white-space: nowrap; }
.chart-head input { appearance: none; width: 19px; height: 11px; border-radius: 6px; background: radial-gradient(circle at 6px 50%, #fff 4px, transparent 5px), #b8b8b8; }
.stack { display: flex; height: 18px; margin-top: 8px; border-radius: 3px; overflow: hidden; font: 700 7px/17px "Liberation Sans", sans-serif; text-align: center; color: #1a1a2e; }
.stack span { display: flex; justify-content: center; white-space: nowrap; }
.s1 { background: #8ca2b4; color: #fff; }
.s2 { background: #bebebe; }
.s3 { background: #94b39a; }
.key { display: flex; justify-content: center; gap: 5px; margin-top: 7px; height: 11px; font: 7px/11px "Liberation Sans", sans-serif; color: #666; white-space: nowrap; }
.key span { display: flex; align-items: center; gap: 3px; }
.key span::before { content: ""; width: 7px; height: 7px; background: #8ca2b4; }
.key .k2::before { background: #bebebe; }
.key .k3::before { background: #94b39a; }
.foot { flex: none; height: 42px; display: flex; align-items: center; gap: 7px; padding: 0 8px 0 10px; border-top: 1px solid #e2e8f0; }
.foot button { height: 23px; }
.export { gap: 4px; font: 9px "Noto Sans", sans-serif; color: #94a3b8; }
.report { flex: 1; font: 700 8px "Noto Sans", sans-serif; }
.mapbtn { width: 27px; border-radius: 4px; background: #222; color: #fff; }
```
